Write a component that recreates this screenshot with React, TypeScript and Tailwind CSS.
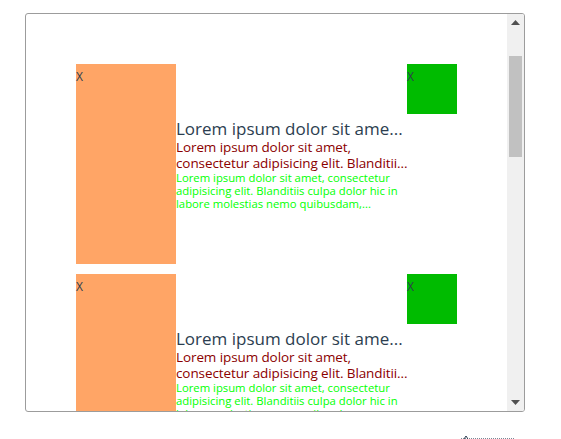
const items = [1, 2, 3]

function Card() {
  return (
    <div className="flex items-start">
      <div className="w-[100px] h-[200px] shrink-0 bg-[#ffa566] text-[12px] leading-[25px] text-[#2c3e50]">
        X
      </div>
      <div className="w-[231px] shrink-0 self-center">
        <h3 className="whitespace-nowrap overflow-hidden text-[17px] leading-[20px] text-[#2c3e50]">
          Lorem ipsum dolor sit ame...
        </h3>
        <p className="text-[13.5px] leading-[16px] tracking-[-0.1px] text-[#8b0000]">
          <span className="block whitespace-nowrap">Lorem ipsum dolor sit amet,</span>
          <span className="block whitespace-nowrap">consectetur adipisicing elit. Blanditii...</span>
        </p>
        <p className="text-[11.3px] leading-[13px] text-[#00ff00]">
          <span className="block whitespace-nowrap">Lorem ipsum dolor sit amet, consectetur</span>
          <span className="block whitespace-nowrap">adipisicing elit. Blanditiis culpa dolor hic in</span>
          <span className="block whitespace-nowrap">labore molestias nemo quibusdam,...</span>
        </p>
      </div>
      <div className="w-[50px] h-[50px] shrink-0 bg-[#00bb00] text-[12px] leading-[25px] text-[#2c3e50]">
        X
      </div>
    </div>
  )
}

export default function App() {
  return (
    <div className="w-[561px] h-[439px] overflow-hidden bg-white font-['Open_Sans',sans-serif]">
      <div className="ml-[25px] mt-[13px] w-[500px] h-[399px] flex border border-[#9c9c9c] rounded-[3px] overflow-hidden">
        <div className="w-[481px] overflow-hidden">
          <div className="flex flex-col gap-[10px] p-[50px]">
            {items.map((i) => (
              <Card key={i} />
            ))}
          </div>
        </div>
        {/* scrollbar */}
        <div className="w-[17px] bg-[#f0f0f0] flex flex-col items-center">
          <div className="h-[17px] flex items-center justify-center">
            <svg width="9" height="5" viewBox="0 0 9 5">
              <path d="M0 5 L4.5 0 L9 5 Z" fill="#505050" />
            </svg>
          </div>
          <div className="mt-[25px] w-[13px] h-[101px] bg-[#c1c1c1]" />
          <div className="flex-1" />
          <div className="h-[17px] flex items-center justify-center">
            <svg width="9" height="5" viewBox="0 0 9 5">
              <path d="M0 0 L9 0 L4.5 5 Z" fill="#505050" />
            </svg>
          </div>
        </div>
      </div>
      <div className="ml-[461px] mt-[26px] w-[53px] h-[1px] border-t border-dotted border-[#7a8896] relative">
        <svg className="absolute left-[3px] -top-[3px]" width="4" height="3" viewBox="0 0 4 3">
          <path d="M0 3 L2 0 L4 3" stroke="#2c3e50" strokeWidth="1" fill="none" />
        </svg>
      </div>
    </div>
  )
}
